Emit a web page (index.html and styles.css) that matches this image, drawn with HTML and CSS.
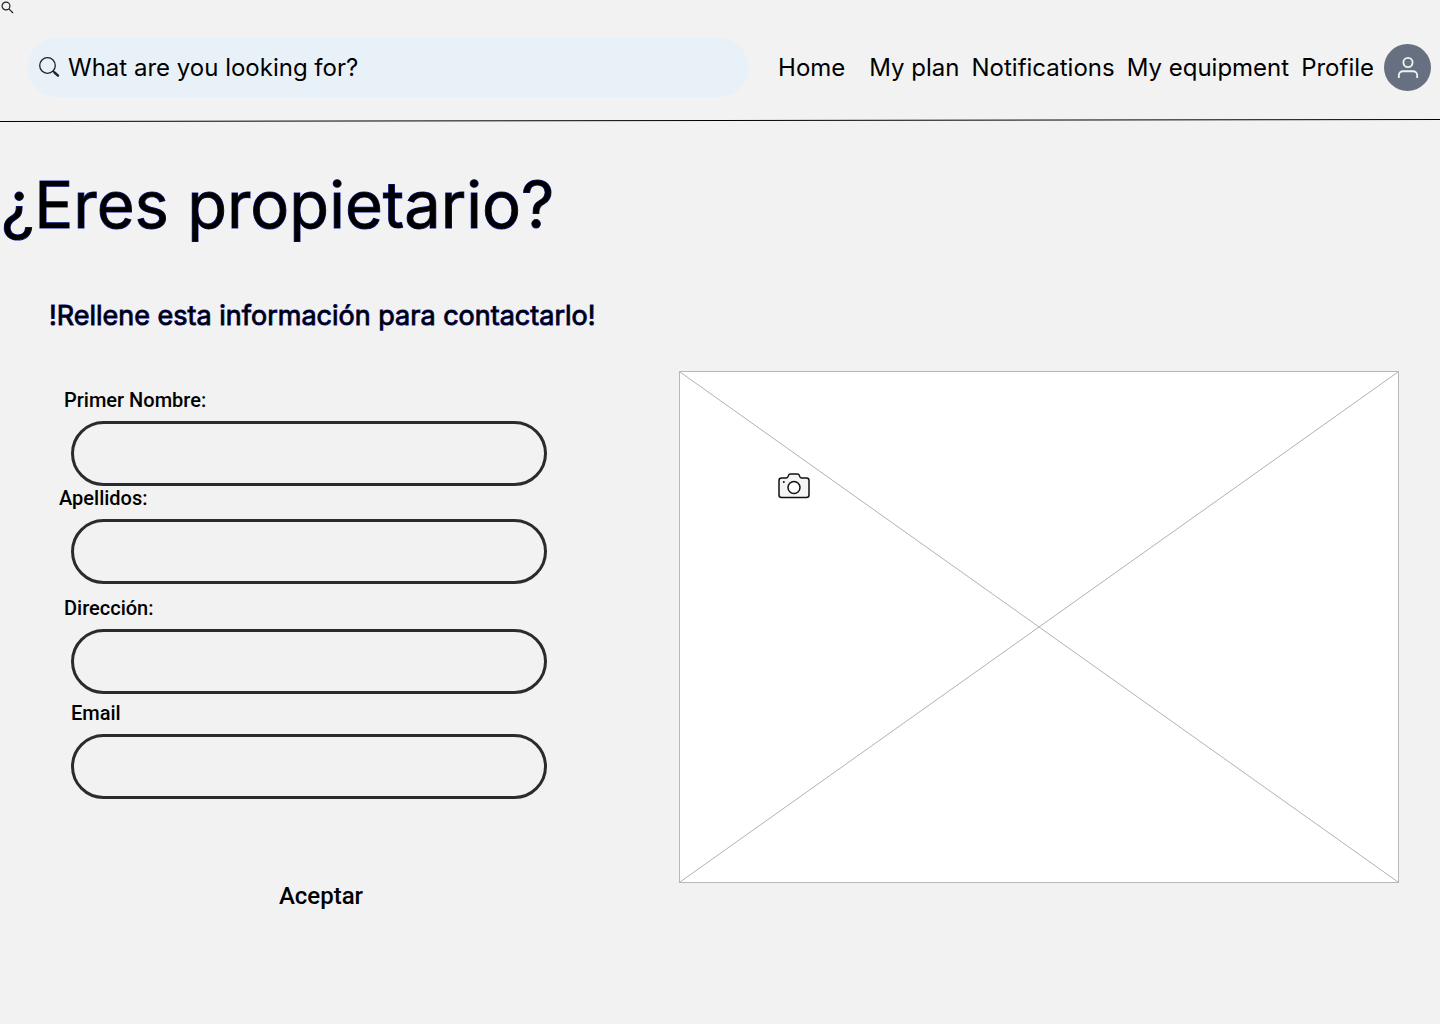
FILE: index.html
```html
<!DOCTYPE html>
<html lang="es">
<head>
<meta charset="utf-8">
<meta name="viewport" content="width=device-width, initial-scale=1">
<title>¿Eres propietario?</title>
<link rel="stylesheet" href="styles.css">
</head>
<body>
<header class="header">
  <svg class="mini-icon" viewBox="0 0 14 14" aria-hidden="true"><circle cx="6" cy="6" r="3.9"/><path d="M8.9 8.9 13 13"/></svg>
  <div class="bar">
    <form class="search" role="search">
      <svg class="search-icon" viewBox="0 0 22 22" aria-hidden="true"><circle cx="9.500" cy="8.500" r="7.800"/><path d="M15 14l1.500 1.500"/><path class="handle" d="M16.500 15.500l3.500 3.200"/></svg>
      <input class="search-input" type="search" aria-label="Search" placeholder="What are you looking for?">
    </form>
    <div class="account">
      <nav class="nav">
        <a class="nav-link nav-home" href="#">Home</a>
        <a class="nav-link" href="#">My plan</a>
        <a class="nav-link" href="#">Notifications</a>
        <a class="nav-link" href="#">My equipment</a>
        <a class="nav-link" href="#">Profile</a>
      </nav>
      <a class="avatar" href="#" aria-label="Account">
        <svg class="avatar-icon" viewBox="0 0 24 24" aria-hidden="true"><circle cx="12" cy="6" r="5"/><path d="M2 23v-3a4.500 4.500 0 0 1 4.500-4.500h11a4.500 4.500 0 0 1 4.500 4.500v3"/></svg>
      </a>
    </div>
  </div>
  <svg class="rule" viewBox="0 0 1440 4" preserveAspectRatio="none" aria-hidden="true"><path d="M0 2.500 1440 .5"/></svg>
</header>
<main>
  <h1 class="title">¿Eres propietario?</h1>
  <h2 class="subtitle">!Rellene esta información para contactarlo!</h2>
  <div class="content">
    <form class="contact">
      <div class="field">
        <label class="label" for="nombre">Primer Nombre:</label>
        <input class="input" id="nombre" type="text">
      </div>
      <div class="field">
        <label class="label label-wide" for="apellidos">Apellidos:</label>
        <input class="input" id="apellidos" type="text">
      </div>
      <div class="field field-spaced">
        <label class="label" for="direccion">Dirección:</label>
        <input class="input" id="direccion" type="text">
      </div>
      <div class="field field-near">
        <label class="label label-inset" for="email">Email</label>
        <input class="input" id="email" type="email">
      </div>
      <button class="submit" type="submit">Aceptar</button>
    </form>
    <div class="picture">
      <svg class="cross" viewBox="0 0 718 510" preserveAspectRatio="none" aria-hidden="true"><path d="M0 0 718 510M718 0 0 510"/></svg>
      <svg class="camera" viewBox="0 0 32 26" role="img" aria-label="Foto"><path class="camera-body" d="M3.500 5H8.200c1 0 1.400-.4 1.700-1.200l.3-.9C10.600 1.600 11.400 1 12.600 1h6.600c1.200 0 2 .6 2.400 1.900l.3.900c.3.800.7 1.200 1.700 1.200h4.900c1.500 0 2.500 1 2.500 2.500v14.500c0 1.500-1 2.500-2.500 2.500h-25C2 24.500 1 23.500 1 22V7.500C1 6 2 5 3.500 5Z"/><circle class="camera-lens" cx="16" cy="14.500" r="6"/><circle class="camera-dot" cx="5.800" cy="9" r="1"/></svg>
    </div>
  </div>
</main>
</body>
</html>
```
FILE: styles.css
```css
* { box-sizing: border-box; }

body {
  margin: 0;
  background: #f2f2f2;
  color: #000;
  font-family: Inter, "Liberation Sans", sans-serif;
}

svg { display: block; }

/* Header */
.mini-icon {
  width: 14px;
  height: 14px;
  fill: none;
  stroke: #222;
  stroke-width: 1.2;
}

.bar {
  display: flex;
  align-items: center;
  justify-content: space-between;
  padding: 24px 9px 22px 27px;
}

.search {
  display: flex;
  align-items: center;
  gap: 8px;
  flex: 0 1 722px;
  height: 59px;
  padding: 0 24px 0 11px;
  border-radius: 30px;
  background: #e9f1f8;
}

.search-icon {
  flex: none;
  width: 22px;
  height: 22px;
  fill: none;
  stroke: #222;
  stroke-width: 1.3;
}

.handle {
  stroke-width: 2.4;
  stroke-linecap: round;
}

.search-input {
  flex: 1;
  min-width: 0;
  padding: 0;
  border: 0;
  outline: 0;
  background: none;
  color: #000;
  font: 24px/29px Inter, "Liberation Sans", sans-serif;
}

.search-input::placeholder { color: #000; opacity: 1; }

.account {
  display: flex;
  align-items: center;
  gap: 10px;
}

.nav {
  display: flex;
  gap: 12px;
}

.nav-home { margin-right: 12px; }

.nav-link {
  color: #000;
  font-size: 24px;
  line-height: 29px;
  text-decoration: none;
  white-space: nowrap;
}

.avatar {
  display: grid;
  place-items: center;
  width: 47px;
  height: 47px;
  border-radius: 50%;
  background: #667080;
}

.avatar-icon {
  width: 22px;
  height: 22px;
  fill: none;
  stroke: #f1f1f1;
  stroke-width: 2;
}

.rule {
  width: 100%;
  height: 4px;
  stroke: #000;
  stroke-width: 1;
}

/* Headings */
.title,
.subtitle {
  margin: 0;
  font-weight: 400;
  -webkit-text-stroke: 1px #10209c;
  paint-order: stroke fill;
}

.title {
  padding: 43px 0 0 1px;
  font-size: 65px;
  line-height: 78px;
}

.subtitle {
  padding: 55px 0 0 49px;
  font-size: 27px;
  line-height: 34px;
}

/* Contact form and picture */
.content {
  display: flex;
  align-items: flex-start;
  gap: 96px;
  padding: 38px 41px 64px 59px;
}

.contact {
  display: flex;
  flex: 1;
  flex-direction: column;
  padding-top: 17px;
}

.field {
  display: flex;
  flex-direction: column;
  gap: 9px;
}

.field-spaced { margin-top: 12px; }
.field-near { margin-top: 7px; }

.label {
  padding-left: 5px;
  font: 500 20px/24px Roboto, "Liberation Sans", sans-serif;
}

.label-wide { padding-left: 0; }
.label-inset { padding-left: 12px; }

.input {
  height: 65px;
  margin: 0 36px 0 12px;
  padding: 0 28px;
  border: 3px solid #292b2d;
  border-radius: 33px;
  background: none;
  font: 20px/24px Roboto, "Liberation Sans", sans-serif;
}

.submit {
  align-self: center;
  margin-top: 83px;
  padding: 0;
  border: 0;
  background: none;
  color: #000;
  font: 500 24px/28px Roboto, "Liberation Sans", sans-serif;
  cursor: pointer;
}

.picture {
  position: relative;
  flex: 0 1 720px;
  aspect-ratio: 720 / 512;
  border: 1px solid #b8b8b8;
  background: #fff;
}

.cross {
  width: 100%;
  height: 100%;
  stroke: #b2b2b2;
  stroke-width: 1;
}

.camera {
  position: absolute;
  top: 101px;
  left: 98px;
  width: 32px;
  height: 26px;
  fill: none;
  stroke: #111;
  stroke-width: 1.5;
}

.camera-body { fill: #f5f5f5; }
.camera-lens { fill: #fff; }
.camera-dot { fill: #111; stroke: none; }
```
